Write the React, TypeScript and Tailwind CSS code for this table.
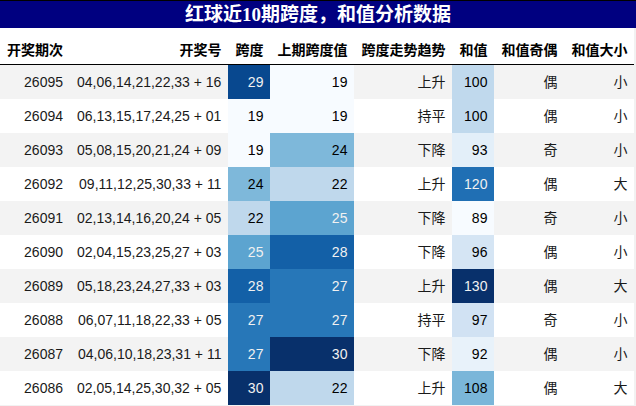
import React from 'react';

type Row = [string, string, number, number, string, number, string, string];

const rows: Row[] = [
  ['26095', '04,06,14,21,22,33 + 16', 29, 19, '上升', 100, '偶', '小'],
  ['26094', '06,13,15,17,24,25 + 01', 19, 19, '持平', 100, '偶', '小'],
  ['26093', '05,08,15,20,21,24 + 09', 19, 24, '下降', 93, '奇', '小'],
  ['26092', '09,11,12,25,30,33 + 11', 24, 22, '上升', 120, '偶', '大'],
  ['26091', '02,13,14,16,20,24 + 05', 22, 25, '下降', 89, '奇', '小'],
  ['26090', '02,04,15,23,25,27 + 03', 25, 28, '下降', 96, '偶', '小'],
  ['26089', '05,18,23,24,27,33 + 03', 28, 27, '上升', 130, '偶', '大'],
  ['26088', '06,07,11,18,22,33 + 05', 27, 27, '持平', 97, '奇', '小'],
  ['26087', '04,06,10,18,23,31 + 11', 27, 30, '下降', 92, '偶', '小'],
  ['26086', '02,05,14,25,30,32 + 05', 30, 22, '上升', 108, '偶', '大'],
];

// matplotlib "Blues" anchors
const blues = [
  [247, 251, 255],
  [222, 235, 247],
  [198, 219, 239],
  [158, 202, 225],
  [107, 174, 214],
  [66, 146, 198],
  [33, 113, 181],
  [8, 81, 156],
  [8, 48, 107],
];

const blue = (t: number) => {
  const p = Math.min(Math.max(t, 0), 1) * 8;
  const i = Math.min(Math.floor(p), 7);
  const f = p - i;
  return blues[i].map((c, k) => c + (blues[i + 1][k] - c) * f);
};

const lum = (rgb: number[]) => {
  const [r, g, b] = rgb.map((c) => {
    const x = c / 255;
    return x <= 0.03928 ? x / 12.92 : Math.pow((x + 0.055) / 1.055, 2.4);
  });
  return 0.2126 * r + 0.7152 * g + 0.0722 * b;
};

const cellStyle = (v: number, min: number, max: number) => {
  const rgb = blue((v - min) / (max - min));
  return {
    backgroundColor: `rgb(${rgb.map(Math.round).join(',')})`,
    color: lum(rgb) < 0.408 ? '#f1f1f1' : '#000000',
  };
};

const headers = ['开奖期次', '开奖号', '跨度', '上期跨度值', '跨度走势趋势', '和值', '和值奇偶', '和值大小'];

export default function App() {
  const span = rows.map((r) => r[2]).concat(rows.map((r) => r[3]));
  const sums = rows.map((r) => r[5]);
  const sMin = Math.min(...span);
  const sMax = Math.max(...span);
  const hMin = Math.min(...sums);
  const hMax = Math.max(...sums);

  return (
    <div className="w-[636px] h-[406px] bg-[#f2f2f2] font-['Liberation_Sans','Noto_Sans_CJK_SC',sans-serif]">
      <div className="h-[28px] border-t border-black bg-[#000080] text-white text-[19px] font-bold leading-[27px] text-center font-['Liberation_Serif','Noto_Sans_CJK_SC',serif]">
        红球近10期跨度，和值分析数据
      </div>
      <table className="border-collapse bg-white text-[14px]">
        <thead>
          <tr className="border-b border-black">
            {headers.map((h, i) => (
              <th
                key={h}
                className={`px-[7px] pt-[12px] pb-[4px] leading-[20px] font-bold text-black whitespace-nowrap ${
                  i === 0 ? 'text-left' : 'text-right'
                }`}
              >
                {h}
              </th>
            ))}
          </tr>
        </thead>
        <tbody>
          {rows.map((r, idx) => (
            <tr key={r[0]} className={idx % 2 === 0 ? 'bg-[#f3f3f3]' : 'bg-white'}>
              <td className="h-[34px] px-[7px] pt-[1px] text-right text-[#1a1a1a]">{r[0]}</td>
              <td className="h-[34px] px-[7px] pt-[1px] text-right text-[#1a1a1a] whitespace-nowrap">{r[1]}</td>
              <td className="h-[34px] px-[7px] pt-[1px] text-right" style={cellStyle(r[2], sMin, sMax)}>
                {r[2]}
              </td>
              <td className="h-[34px] px-[7px] pt-[1px] text-right" style={cellStyle(r[3], sMin, sMax)}>
                {r[3]}
              </td>
              <td className="h-[34px] px-[7px] pt-[1px] text-right text-[#1a1a1a]">{r[4]}</td>
              <td className="h-[34px] px-[7px] pt-[1px] text-right" style={cellStyle(r[5], hMin, hMax)}>
                {r[5]}
              </td>
              <td className="h-[34px] px-[7px] pt-[1px] text-right text-[#1a1a1a]">{r[6]}</td>
              <td className="h-[34px] px-[7px] pt-[1px] text-right text-[#1a1a1a]">{r[7]}</td>
            </tr>
          ))}
        </tbody>
      </table>
    </div>
  );
}
